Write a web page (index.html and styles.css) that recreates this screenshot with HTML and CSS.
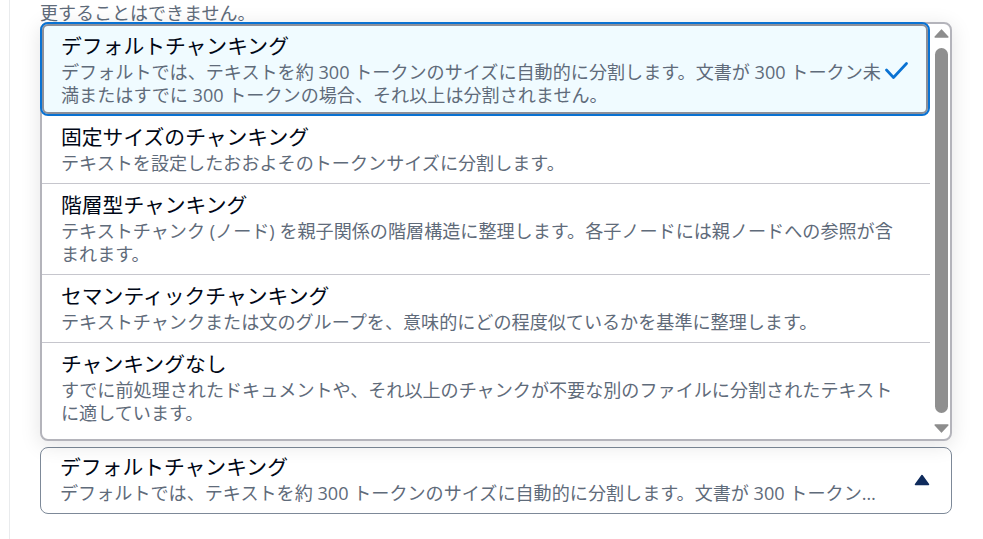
FILE: index.html
```html
<!DOCTYPE html>
<html lang="ja">
<head>
<meta charset="utf-8">
<title>チャンキング</title>
<link rel="stylesheet" href="styles.css">
</head>
<body>
<div class="page">
  <div class="panel">
    <p class="hint">更することはできません。</p>
    <div class="dropdown">
      <ul class="options">
        <li class="option selected">
          <div class="text">
            <div class="title">デフォルトチャンキング</div>
            <div class="desc">デフォルトでは、テキストを約 300 トークンのサイズに自動的に分割します。文書が 300 トークン未満またはすでに 300 トークンの場合、それ以上は分割されません。</div>
          </div>
          <svg class="check" viewBox="0 0 23 18" width="23" height="18"><polyline points="1.5,8 8.5,15.5 21.5,1.5" fill="none" stroke="#0972d3" stroke-width="2.7" stroke-linecap="round" stroke-linejoin="round"/></svg>
        </li>
        <li class="option">
          <div class="text">
            <div class="title">固定サイズのチャンキング</div>
            <div class="desc">テキストを設定したおおよそのトークンサイズに分割します。</div>
          </div>
        </li>
        <li class="option">
          <div class="text">
            <div class="title">階層型チャンキング</div>
            <div class="desc">テキストチャンク (ノード) を親子関係の階層構造に整理します。各子ノードには親ノードへの参照が含まれます。</div>
          </div>
        </li>
        <li class="option">
          <div class="text">
            <div class="title">セマンティックチャンキング</div>
            <div class="desc">テキストチャンクまたは文のグループを、意味的にどの程度似ているかを基準に整理します。</div>
          </div>
        </li>
        <li class="option">
          <div class="text">
            <div class="title">チャンキングなし</div>
            <div class="desc">すでに前処理されたドキュメントや、それ以上のチャンクが不要な別のファイルに分割されたテキストに適しています。</div>
          </div>
        </li>
      </ul>
      <div class="scrollbar">
        <svg class="arrow" viewBox="0 0 15 9" width="15" height="9"><polygon points="7.5,1.2 13.8,8 1.2,8" fill="#8d8d8d" stroke="#8d8d8d" stroke-width="1.6" stroke-linejoin="round"/></svg>
        <span class="thumb"></span>
        <svg class="arrow" viewBox="0 0 15 9" width="15" height="9"><polygon points="1.2,1 13.8,1 7.5,7.8" fill="#8d8d8d" stroke="#8d8d8d" stroke-width="1.6" stroke-linejoin="round"/></svg>
      </div>
    </div>
    <div class="trigger">
      <div class="text">
        <div class="title">デフォルトチャンキング</div>
        <div class="desc ellipsis">デフォルトでは、テキストを約 300 トークンのサイズに自動的に分割します。文書が 300 トークン未満またはすでに 300 トークンの場合、それ以上は分割されません。</div>
      </div>
      <svg class="caret" viewBox="0 0 16 12" width="16" height="12"><polygon points="8,1.5 14.5,10.5 1.5,10.5" fill="#0f2b5c" stroke="#0f2b5c" stroke-width="1.5" stroke-linejoin="round"/></svg>
    </div>
  </div>
</div>
</body>
</html>
```
FILE: styles.css
```css
* { box-sizing: border-box; }

html, body {
  margin: 0;
  background: #ffffff;
}

body {
  font-family: "Open Sans", "Noto Sans CJK JP", sans-serif;
  color: #000716;
}

.page {
  padding-left: 9px;
  height: 539px;
  overflow: hidden;
}

.panel {
  border-left: 1px solid #e9ebed;
  padding-left: 30px;
  width: 943px;
  height: 100%;
}

.hint {
  margin: 0;
  padding-top: 2px;
  font-size: 18px;
  line-height: 23px;
  color: #5f6b7a;
  white-space: nowrap;
}

.dropdown {
  position: relative;
  z-index: 1;
  margin-top: -3px;
  width: 912px;
  height: 419px;
  display: flex;
  border: 2px solid #b4b4bb;
  border-radius: 8px;
  background: #ffffff;
  box-shadow: 0 4px 20px 1px rgba(0, 7, 22, 0.10);
}

.options {
  list-style: none;
  margin: 0;
  padding: 0;
  flex: 1;
  min-width: 0;
}

.option {
  display: flex;
  align-items: flex-start;
  padding: 9px 30px 8px 19px;
  border-bottom: 1px solid #c6c6cd;
}

.option:last-child {
  border-bottom: 0;
}

.option.selected {
  margin: -2px 0 0 -2px;
  align-items: center;
  gap: 1px;
  padding: 10px 20px 7px 19px;
  border: 2px solid #0972d3;
  border-radius: 8px;
  background: #f0fbff;
  box-shadow: inset 0 0 0 2px #8c8f99;
}

.text {
  flex: 1;
  min-width: 0;
}

.title {
  font-size: 20.8px;
  line-height: 24px;
  color: #000716;
}

.desc {
  margin-top: 3px;
  font-size: 18.1px;
  line-height: 23px;
  color: #5f6b7a;
}

.ellipsis {
  white-space: nowrap;
  overflow: hidden;
  text-overflow: ellipsis;
}

.check {
  flex: none;
  display: block;
}

.scrollbar {
  width: 20px;
  flex: none;
  display: flex;
  flex-direction: column;
  align-items: center;
  padding: 5px 0 6px 3px;
}

.arrow {
  flex: none;
  display: block;
}

.thumb {
  flex: 1;
  width: 13px;
  margin: 10px 0 11px;
  border-radius: 7px;
  background: #8f8f8f;
}

.trigger {
  margin-top: 6px;
  width: 912px;
  height: 67px;
  display: flex;
  align-items: center;
  gap: 30px;
  padding: 7px 21px 8px 19px;
  border: 1px solid #7d8998;
  border-radius: 8px;
  background: #ffffff;
}

.caret {
  flex: none;
  display: block;
}
```
